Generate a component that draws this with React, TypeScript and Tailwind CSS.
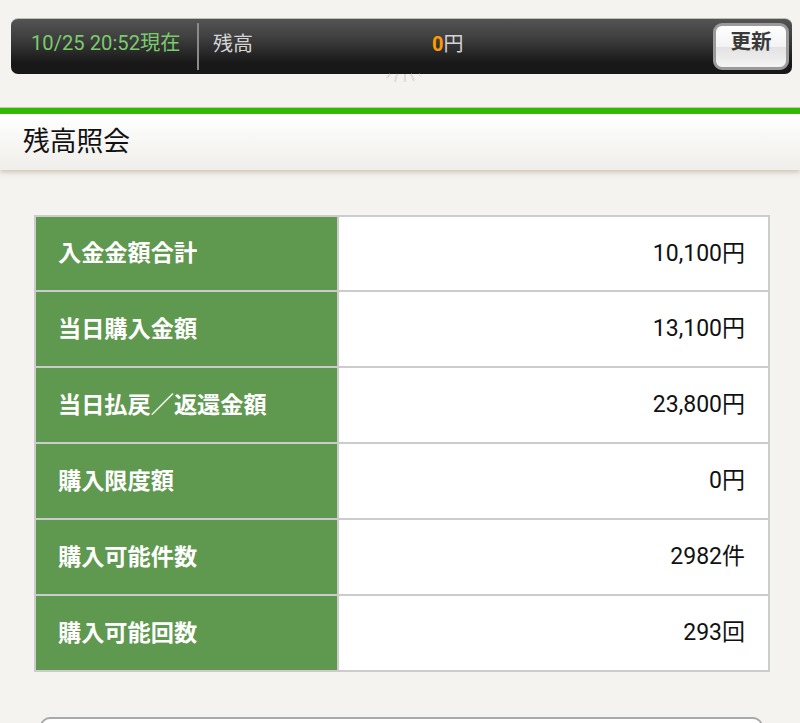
const font = { fontFamily: '"Roboto", "Noto Sans CJK JP", sans-serif' };

const rows: [string, string][] = [
  ["入金金額合計", "10,100円"],
  ["当日購入金額", "13,100円"],
  ["当日払戻／返還金額", "23,800円"],
  ["購入限度額", "0円"],
  ["購入可能件数", "2982件"],
  ["購入可能回数", "293回"],
];

export default function App() {
  return (
    <div className="relative h-[723px] w-[800px] overflow-hidden bg-[#f4f3ef]" style={font}>
      <div className="px-[11px] pt-[18px]">
        <div className="flex h-[56px] w-[781px] items-center rounded-[7px] border-t border-[#bdbdb8] bg-[linear-gradient(#545454,#3e3e3e_35%,#181818_80%,#181818)] pr-[3px]">
          <div className="w-[183px] pb-[6px] pl-[20px] text-[20.2px] text-[#7acb6c] whitespace-nowrap">10/25 20:52現在</div>
          <div className="mx-[3px] h-[47px] w-[2px] bg-[#8a8a8a]" />
          <div className="w-[230px] pb-[6px] pl-[11px] text-[20px] text-[#d4d4d4]">残高</div>
          <div className="flex-1 pb-[6px] text-[20px] text-[#d4d4d4]">
            <span className="font-bold text-[#ff9a00]">0</span>円
          </div>
          <button className="flex h-[47px] w-[76px] items-center justify-center rounded-[9px] border-[3px] border-[#9a9a9a] bg-[linear-gradient(#ffffff,#f3f3f3_50%,#e2e2e2_52%,#f4f4f4)] pb-[8px] text-[20.5px] font-bold text-[#3a3a3a]">
            更新
          </button>
        </div>
      </div>

      <svg className="absolute left-[384px] top-[73px]" width="40" height="10" viewBox="0 0 40 10" fill="none" stroke="#dcdcd9" strokeWidth="2">
        <path d="M6 1 3 5M13 1 11 9M21 1v8M27 1l3 7" />
        <path d="M35 1l2 3" stroke="#e9e9e5" />
      </svg>

      <div className="mt-[33px] h-[7px] border-t border-[#c9c7a8] bg-[#2fbb04]" />
      <div className="flex h-[56px] items-center bg-gradient-to-b from-[#ffffff] to-[#efeee9] pl-[23px] text-[26.75px] text-[#111111] shadow-[0_2px_5px_rgba(170,150,125,0.55)]">
        残高照会
      </div>

      <div className="ml-[34px] mt-[45px] w-[736px] border-2 border-[#cccccc]">
        {rows.map(([label, value], i) => (
          <div key={label} className={i > 0 ? "flex h-[76px] border-t-2 border-[#cccccc]" : "flex h-[73px]"}>
            <div className="flex w-[303px] items-center border-r-2 border-[#cccccc] bg-[#5f984f] pl-[22px] text-[23.2px] font-bold text-white whitespace-nowrap">
              {label}
            </div>
            <div className="flex flex-1 items-center justify-end bg-white pt-[1px] pr-[23px] text-[23px] text-[#111111]">
              {value}
            </div>
          </div>
        ))}
      </div>

      <div className="ml-[40px] mt-[45px] h-[40px] w-[723px] rounded-[10px] border-2 border-[#a8a8a8] bg-white" />
    </div>
  );
}
